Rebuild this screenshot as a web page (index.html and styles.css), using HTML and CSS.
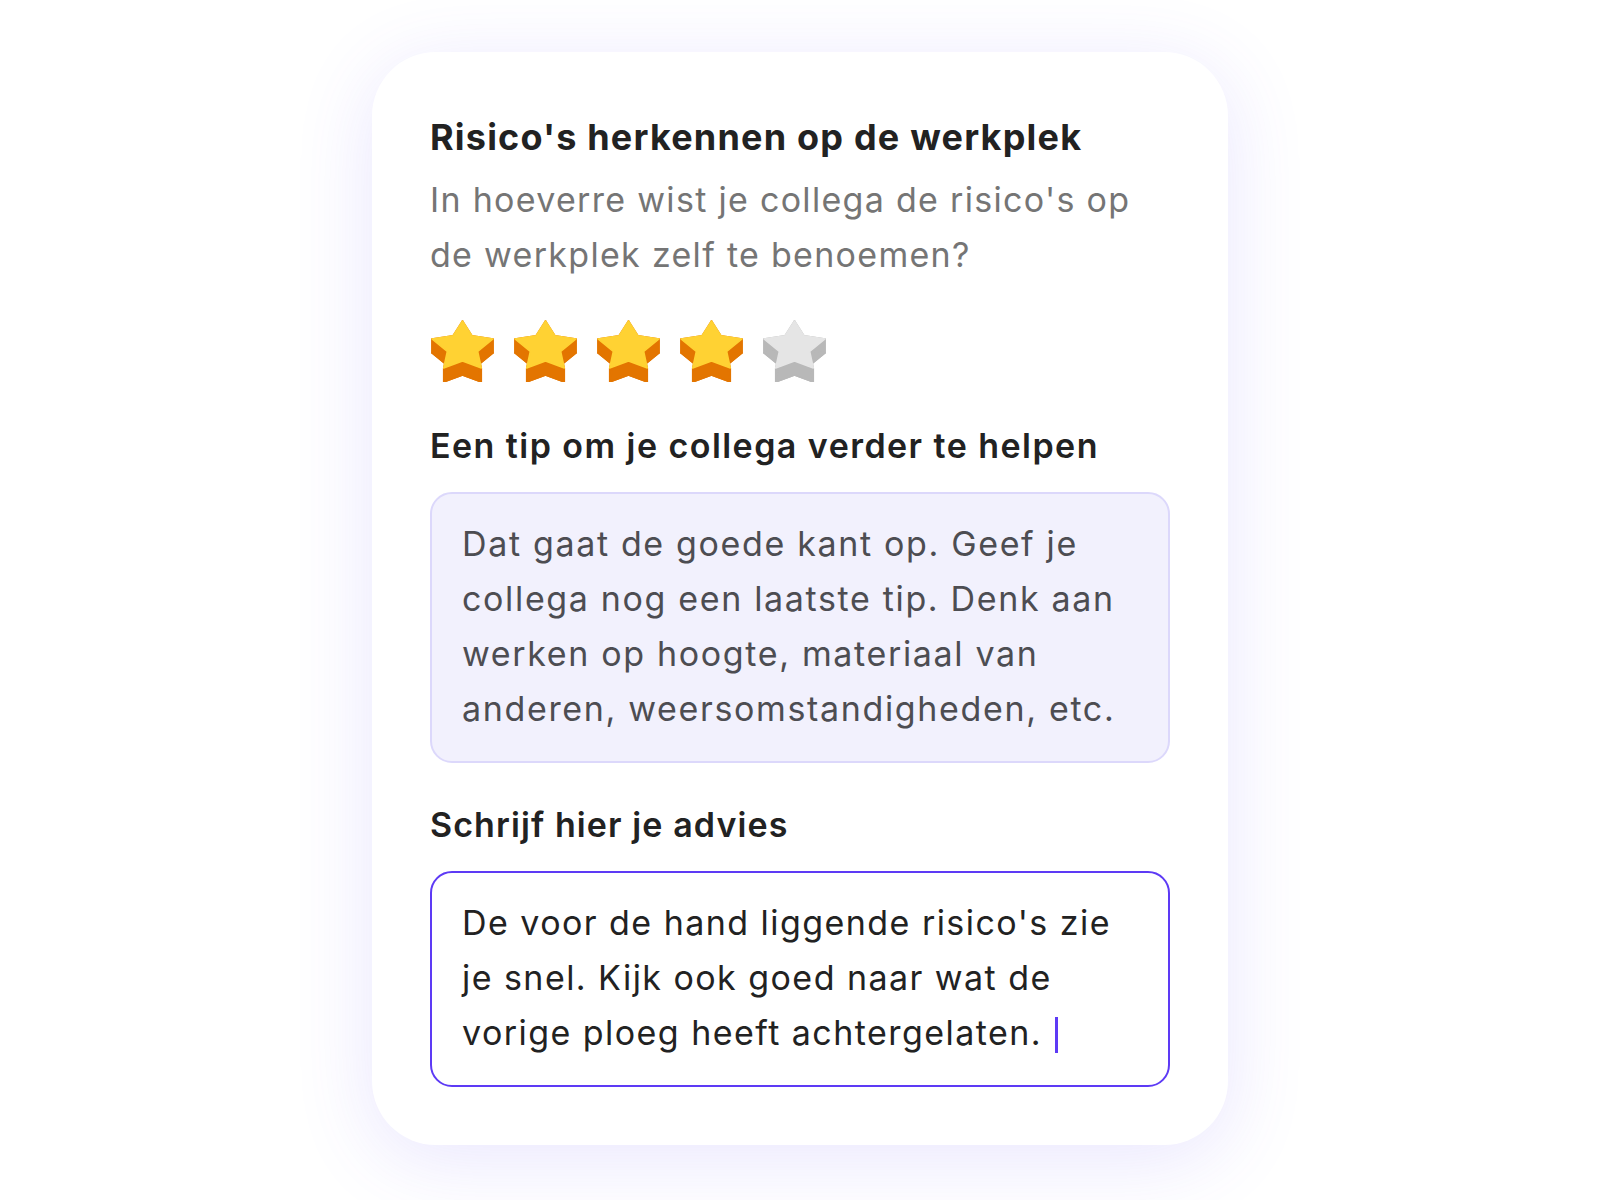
FILE: index.html
```html
<!DOCTYPE html>
<html lang="nl">
<head>
<meta charset="utf-8">
<title>Risico's herkennen op de werkplek</title>
<link rel="stylesheet" href="styles.css">
</head>
<body>
<main class="page">
  <section class="card">
    <h1 class="title">Risico's herkennen op de werkplek</h1>
    <p class="question">In hoeverre wist je collega de risico's op<br>de werkplek zelf te benoemen?</p>
    <div class="stars" aria-label="4 van 5 sterren">
      <svg class="star on" viewBox="0 0 64 64" width="64" height="64"><use href="#star"/></svg>
      <svg class="star on" viewBox="0 0 64 64" width="64" height="64"><use href="#star"/></svg>
      <svg class="star on" viewBox="0 0 64 64" width="64" height="64"><use href="#star"/></svg>
      <svg class="star on" viewBox="0 0 64 64" width="64" height="64"><use href="#star"/></svg>
      <svg class="star off" viewBox="0 0 64 64" width="64" height="64"><use href="#star"/></svg>
    </div>
    <h2 class="label">Een tip om je collega verder te helpen</h2>
    <div class="tip">Dat gaat de goede kant op. Geef je<br>collega nog een laatste tip. Denk aan<br>werken op hoogte, materiaal van<br>anderen, weersomstandigheden, etc.</div>
    <h2 class="label label-advice">Schrijf hier je advies</h2>
    <div class="input">De voor de hand liggende risico's zie<br>je snel. Kijk ook goed naar wat de<br>vorige ploeg heeft achtergelaten. <span class="caret"></span></div>
  </section>
</main>
<svg width="0" height="0" class="defs" aria-hidden="true">
  <defs>
    <g id="star">
      <g class="star-side">
        <polygon points="32.5,3 41.9,17.7 63,21 63,35 41.9,31.7 32.5,17"/>
        <polygon points="63,21 47.7,33.3 51.3,50 51.3,64 47.7,47.3 63,35"/>
        <polygon points="51.3,50 32.5,43 13.7,50 13.7,64 32.5,57 51.3,64"/>
        <polygon points="13.7,50 17.3,33.3 2,21 2,35 17.3,47.3 13.7,64"/>
        <polygon points="2,21 23.1,17.7 32.5,3 32.5,17 23.1,31.7 2,35"/>
        <polygon points="32.5,17 41.9,31.7 63,35 47.7,47.3 51.3,64 32.5,57 13.7,64 17.3,47.3 2,35 23.1,31.7"/>
      </g>
      <polygon class="star-face" points="32.5,3 41.9,17.7 63,21 47.7,33.3 51.3,50 32.5,43 13.7,50 17.3,33.3 2,21 23.1,17.7"/>
    </g>
  </defs>
</svg>
</body>
</html>
```
FILE: styles.css
```css
html, body {
  margin: 0;
  padding: 0;
  background: #ffffff;
}

body {
  font-family: Inter, "Noto Sans", "DejaVu Sans", sans-serif;
  color: #222222;
}

.page {
  min-height: 1200px;
  box-sizing: border-box;
  padding-top: 52px;
  display: flex;
  justify-content: center;
  align-items: flex-start;
}

.card {
  width: 856px;
  box-sizing: border-box;
  padding: 63px 58px 58px;
  background: #ffffff;
  border-radius: 64px;
  box-shadow: 0 14px 80px rgba(96, 76, 245, 0.14);
}

.title {
  margin: 0 0 13px;
  font-size: 36px;
  line-height: 44px;
  font-weight: 700;
  color: #222222;
  letter-spacing: 1.2px;
}

.question {
  margin: 0;
  font-size: 34px;
  line-height: 55px;
  font-weight: 400;
  color: #757575;
  letter-spacing: 1.3px;
}

.stars {
  display: flex;
  gap: 19px;
  margin-top: 36px;
  height: 64px;
}

.star {
  display: block;
  width: 64px;
  height: 64px;
}

.star.on {
  --side: #e37500;
  --face: #ffd233;
}

.star.off {
  --side: #b8b8b8;
  --face: #e5e5e5;
}

.star-side polygon {
  fill: var(--side);
  stroke: var(--side);
  stroke-width: 1.5;
  stroke-linejoin: round;
}

.star-face {
  fill: var(--face);
  stroke: var(--face);
  stroke-width: 1.5;
  stroke-linejoin: round;
}

.label {
  margin: 42px 0 24px;
  font-size: 34px;
  line-height: 44px;
  font-weight: 600;
  color: #222222;
  letter-spacing: 1.45px;
}

.label-advice {
  margin-top: 40px;
  letter-spacing: 1.1px;
}

.tip,
.input {
  font-size: 34px;
  line-height: 55px;
  border-radius: 22px;
  padding: 22px 30px 25px;
}

.tip {
  background: #f2f1fd;
  border: 2px solid #dcd8fb;
  color: #4d4d52;
  letter-spacing: 1.65px;
}

.input {
  background: #ffffff;
  border: 2px solid #5d3af5;
  color: #222222;
  letter-spacing: 1.45px;
}

.caret {
  display: inline-block;
  width: 3px;
  height: 36px;
  background: #5d3af5;
  vertical-align: -8px;
  margin-left: 2px;
}

.defs {
  position: absolute;
  width: 0;
  height: 0;
  overflow: hidden;
}
```
